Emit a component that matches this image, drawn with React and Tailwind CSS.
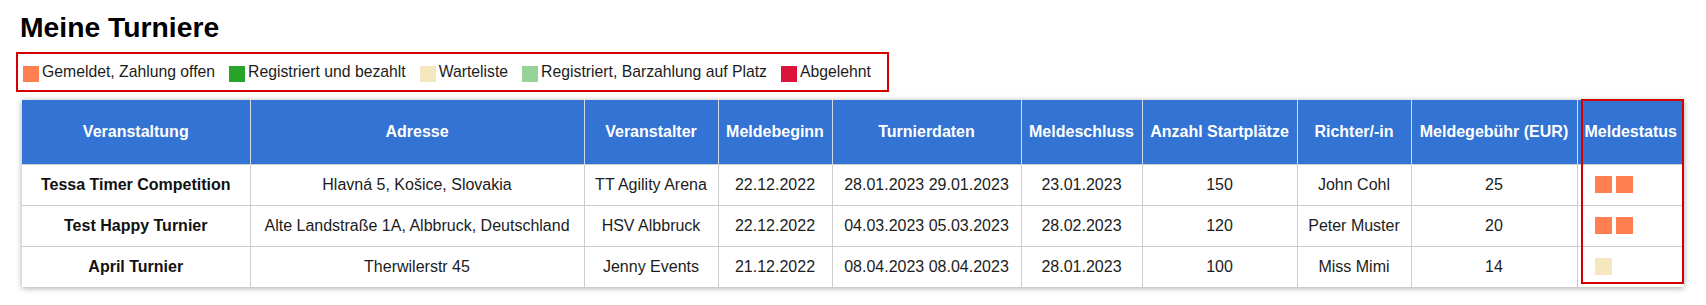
import React from "react";

const legend = [
  { c: "bg-[#ff7f50]", t: "Gemeldet, Zahlung offen" },
  { c: "bg-[#28a428]", t: "Registriert und bezahlt" },
  { c: "bg-[#f5e8bf]", t: "Warteliste" },
  { c: "bg-[#96d396]", t: "Registriert, Barzahlung auf Platz" },
  { c: "bg-[#dc143c]", t: "Abgelehnt" },
];

const cols = [
  { t: "Veranstaltung", w: "w-[228px]" },
  { t: "Adresse", w: "w-[334px]" },
  { t: "Veranstalter", w: "w-[134px]" },
  { t: "Meldebeginn", w: "w-[114px]" },
  { t: "Turnierdaten", w: "w-[189px]" },
  { t: "Meldeschluss", w: "w-[121px]" },
  { t: "Anzahl Startplätze", w: "w-[155px]" },
  { t: "Richter/-in", w: "w-[114px]" },
  { t: "Meldegebühr (EUR)", w: "w-[166px]" },
  { t: "Meldestatus", w: "w-[107px]" },
];

const rows = [
  {
    name: "Tessa Timer Competition",
    addr: "Hlavná 5, Košice, Slovakia",
    org: "TT Agility Arena",
    start: "22.12.2022",
    dates: "28.01.2023 29.01.2023",
    end: "23.01.2023",
    places: "150",
    judge: "John Cohl",
    fee: "25",
    status: ["bg-[#ff7f50]", "bg-[#ff7f50]"],
  },
  {
    name: "Test Happy Turnier",
    addr: "Alte Landstraße 1A, Albbruck, Deutschland",
    org: "HSV Albbruck",
    start: "22.12.2022",
    dates: "04.03.2023 05.03.2023",
    end: "28.02.2023",
    places: "120",
    judge: "Peter Muster",
    fee: "20",
    status: ["bg-[#ff7f50]", "bg-[#ff7f50]"],
  },
  {
    name: "April Turnier",
    addr: "Therwilerstr 45",
    org: "Jenny Events",
    start: "21.12.2022",
    dates: "08.04.2023 08.04.2023",
    end: "28.01.2023",
    places: "100",
    judge: "Miss Mimi",
    fee: "14",
    status: ["bg-[#f5e8bf]"],
  },
];

export default function App() {
  return (
    <div
      className="bg-white pl-4 pr-4 pb-4 text-[#1c1c1c]"
      style={{ fontFamily: '"Liberation Sans", Arial, sans-serif' }}
    >
      <h2 className="pl-[4px] pt-[12px] text-[28.3px] font-bold leading-[30px] text-black">
        Meine Turniere
      </h2>
      <div className="mt-[10px] inline-flex h-[40px] items-center gap-[14px] border-2 border-[#d40000] pl-[5px] pr-[16px] text-[15.75px] text-[#1c1c1c]">
        {legend.map((l) => (
          <div key={l.t} className="flex items-center gap-[3px]">
            <span className={`mt-[3px] inline-block h-[16px] w-[16px] ${l.c}`} />
            <span>{l.t}</span>
          </div>
        ))}
      </div>
      <div className="relative ml-[6px] mr-[6px] mt-[8px] shadow-[0_1px_6px_rgba(0,0,0,0.35)]">
        <table className="w-full table-fixed border-collapse text-[16px]">
          <thead>
            <tr className="h-[64px] bg-[#3273d4]">
              {cols.map((c) => (
                <th
                  key={c.t}
                  className={`${c.w} border-x border-[#d5dbe6] px-1 text-center font-bold text-white first:border-l-0 last:border-r-0`}
                >
                  {c.t}
                </th>
              ))}
            </tr>
          </thead>
          <tbody>
            {rows.map((r) => (
              <tr key={r.name} className="h-[41px] border-t border-[#cccccc]">
                <td className="border-r border-[#cccccc] text-center font-bold text-[#111]">{r.name}</td>
                <td className="border-r border-[#cccccc] text-center">{r.addr}</td>
                <td className="border-r border-[#cccccc] text-center">{r.org}</td>
                <td className="border-r border-[#cccccc] text-center">{r.start}</td>
                <td className="border-r border-[#cccccc] text-center">{r.dates}</td>
                <td className="border-r border-[#cccccc] text-center">{r.end}</td>
                <td className="border-r border-[#cccccc] text-center">{r.places}</td>
                <td className="border-r border-[#cccccc] text-center">{r.judge}</td>
                <td className="border-r border-[#cccccc] text-center">{r.fee}</td>
                <td className="pl-[17px]">
                  <div className="flex gap-[4px]">
                    {r.status.map((s, i) => (
                      <span key={i} className={`inline-block h-[17px] w-[17px] ${s}`} />
                    ))}
                  </div>
                </td>
              </tr>
            ))}
          </tbody>
        </table>
        <div className="pointer-events-none absolute -top-[1px] bottom-[3px] right-0 w-[103px] border-2 border-[#d40000]" />
      </div>
    </div>
  );
}
